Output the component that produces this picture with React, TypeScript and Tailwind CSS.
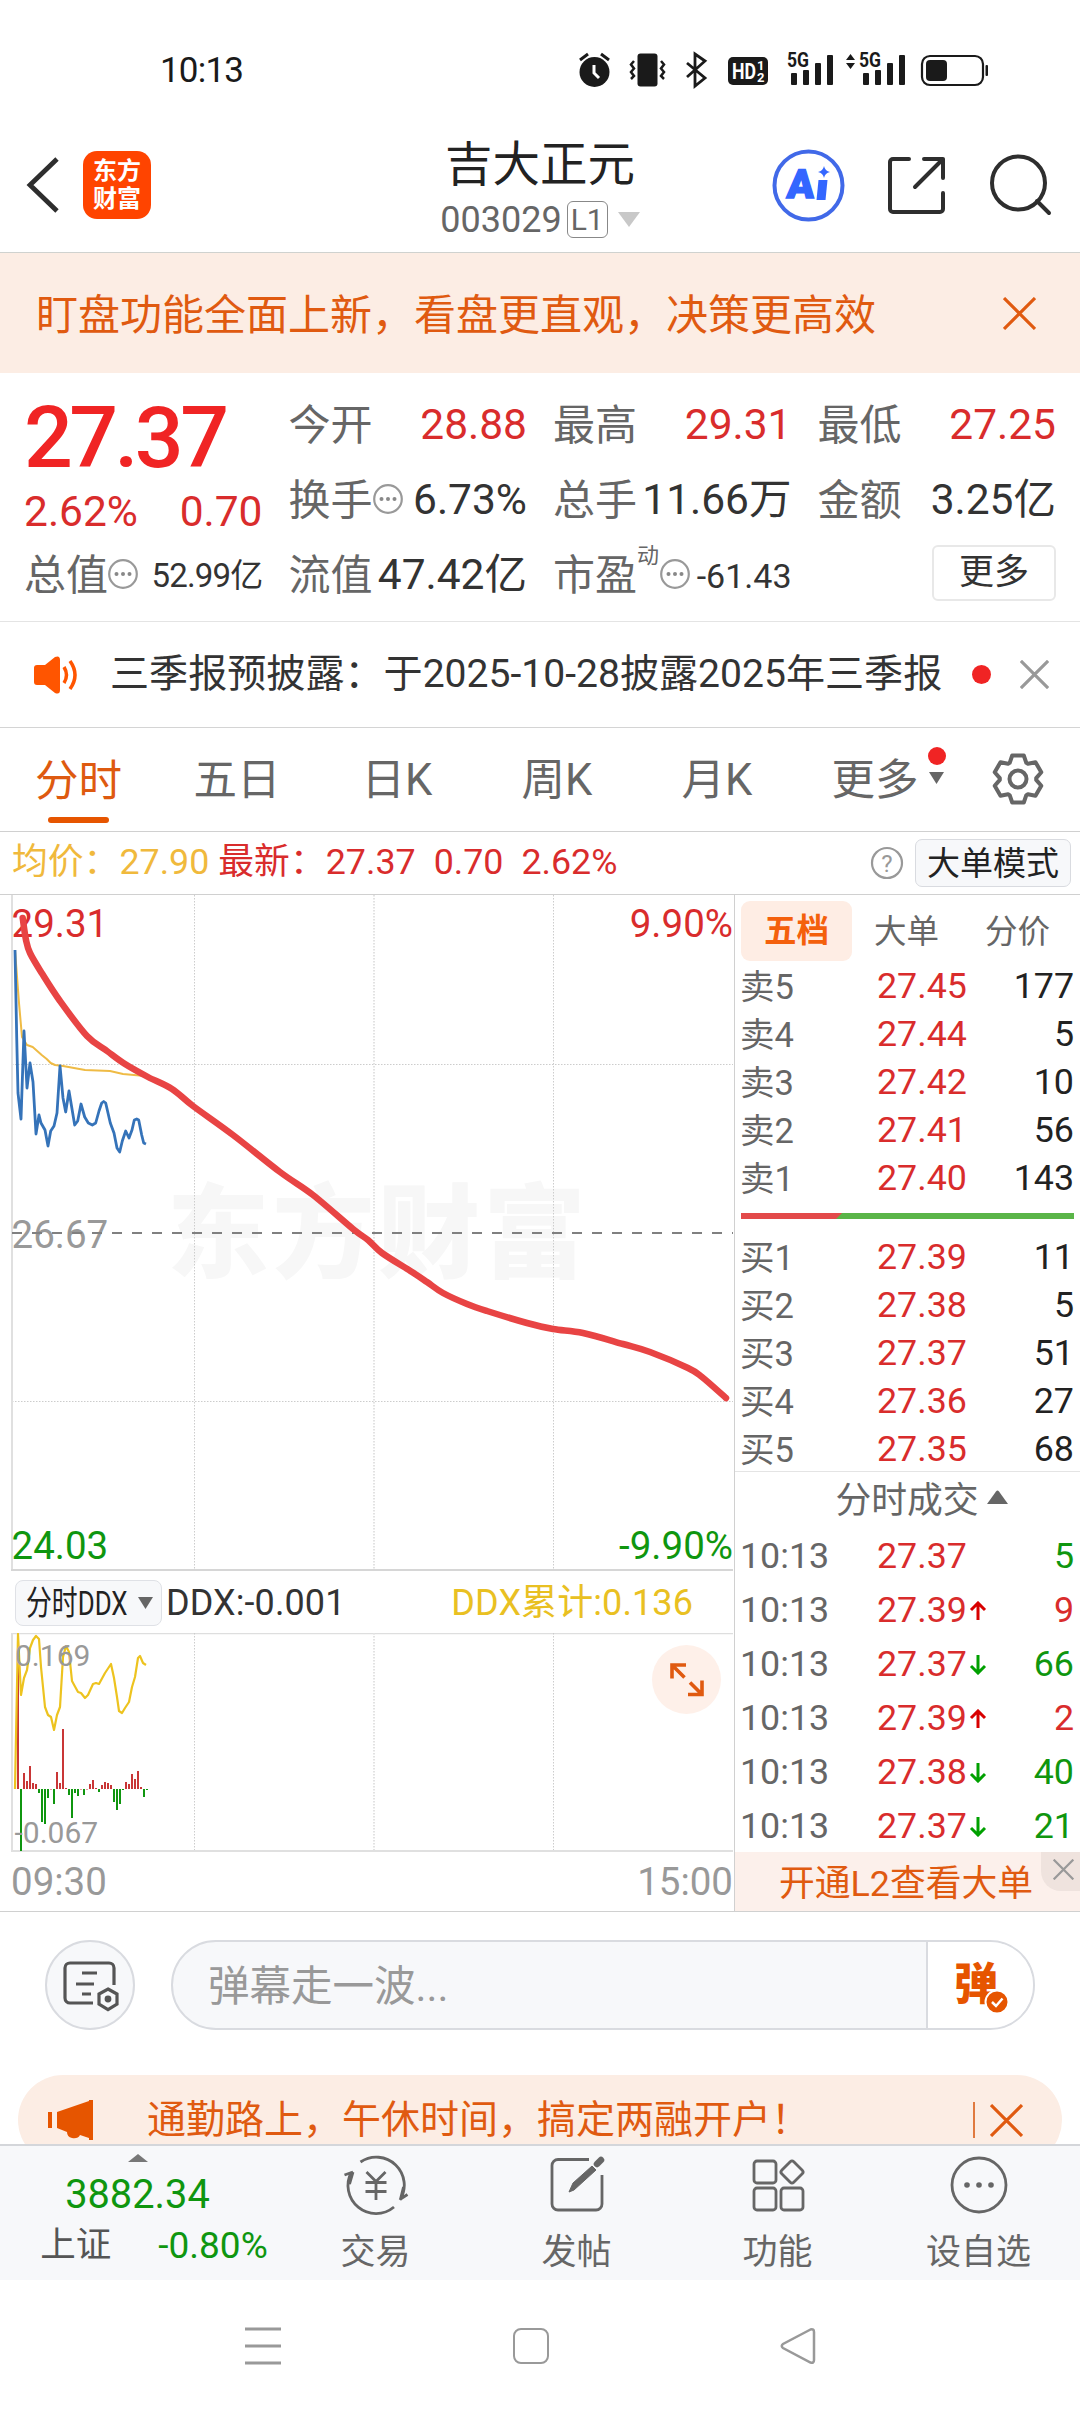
import type { ReactNode } from "react";

const RED = "#d92c2c";
const GREEN = "#0f960f";

const sells = [
  ["卖5", "27.45", "177"],
  ["卖4", "27.44", "5"],
  ["卖3", "27.42", "10"],
  ["卖2", "27.41", "56"],
  ["卖1", "27.40", "143"],
];

const buys = [
  ["买1", "27.39", "11"],
  ["买2", "27.38", "5"],
  ["买3", "27.37", "51"],
  ["买4", "27.36", "27"],
  ["买5", "27.35", "68"],
];

const trades = [
  { time: "10:13", price: "27.37", dir: "", vol: "5", up: false },
  { time: "10:13", price: "27.39", dir: "up", vol: "9", up: true },
  { time: "10:13", price: "27.37", dir: "down", vol: "66", up: false },
  { time: "10:13", price: "27.39", dir: "up", vol: "2", up: true },
  { time: "10:13", price: "27.38", dir: "down", vol: "40", up: false },
  { time: "10:13", price: "27.37", dir: "down", vol: "21", up: false },
];

const priceLine =
  "15,950 16.7,1037 18,1093 21,1119 24,1031 27,1088 30,1063 33,1082 36,1134 39,1115 41,1123 45,1130 48,1146 50.7,1131 54,1126 57,1113 60,1066 63,1098 65.7,1112 69,1091 74.7,1125 77.7,1121 81,1104 84.7,1117 88.3,1123 92.3,1125 95.7,1123 99,1111 101.7,1103 103.7,1101.5 105.7,1103 110.3,1123 114,1133 117,1148 119.7,1152 122.3,1141 125.7,1131 129,1138 132,1130 134.3,1120 136.7,1119 138.7,1120 141.7,1135 143.7,1143 146,1144";

const avgLine =
  "15,950 19,1003 22,1037 27,1045 32.7,1047 41.7,1055 46.7,1059 50.7,1063 55,1065 63,1066 85,1070 110,1071 123,1074 145,1076";

const trendLine =
  "22.7,918 26,940 30,953 41.7,973 60,1001 87,1036 107,1051 125,1064 148,1077 172,1089 193,1106 233,1135 280,1172 313,1195 353,1229 368,1240 382,1253 412,1272 427,1282 443,1293 467,1304 487,1311 527,1323 553,1329 583,1333 623,1344 650,1352 688,1368 702,1377 726,1398";

const ddxLine =
  "15,1789 18,1634 21,1695 24,1678 27,1670 30,1648 33,1640 36,1636 39,1639 41,1667 45,1707 48,1715 51,1717 54,1730 57,1715 60,1707 63,1657 66,1646 69,1652 72,1681 74.7,1686 78,1692 81,1693 85,1698 88,1695 93,1684 96,1683 99,1684 105,1673 111,1664 114,1678 117,1697 119,1711 122,1713 125,1708 129,1702 132,1687 135,1677 138,1658 140,1656 143,1663 146,1665";

// one value per minute, positive is drawn above the zero line
const ddxBars = [
  155, -62, 16, 8, 23, 6, 5, -4, -33, -35, -9, 0, -15, 17, 6, 60, 1, -6, -29,
  -4, -7, 0, -6, 0, 5, 9, 1, -3, 4, 7, 6, 4, -13, -21, -15, -1, 7, 5, 15, 10,
  18, 2, -8, -1,
];

const gearPoints = [0, 60, 120, 180, 240, 300]
  .flatMap((deg) => {
    const a = (deg * Math.PI) / 180;
    return [
      [-8.3, -16.2],
      [-5.8, -23.5],
      [5.8, -23.5],
      [8.3, -16.2],
    ].map(
      ([x, y]) =>
        `${(x * Math.cos(a) - y * Math.sin(a)).toFixed(1)},${(x * Math.sin(a) + y * Math.cos(a)).toFixed(1)}`,
    );
  })
  .join(" ");

// Catmull-Rom through the points, written as cubic beziers
function smooth(points: string) {
  const p = points.split(" ").map((s) => s.split(",").map(Number));
  let d = `M${p[0][0]} ${p[0][1]}`;
  for (let i = 0; i < p.length - 1; i++) {
    const a = p[i - 1] ?? p[i];
    const b = p[i];
    const c = p[i + 1];
    const e = p[i + 2] ?? c;
    d += `C${b[0] + (c[0] - a[0]) / 6} ${b[1] + (c[1] - a[1]) / 6} ${c[0] - (e[0] - b[0]) / 6} ${c[1] - (e[1] - b[1]) / 6} ${c[0]} ${c[1]}`;
  }
  return d;
}

function Cross({ size, color, width = 3 }: { size: number; color: string; width?: number }) {
  return (
    <svg width={size} height={size} viewBox="0 0 32 32" className="shrink-0">
      <path d="M1 1L31 31M31 1L1 31" stroke={color} strokeWidth={width} fill="none" />
    </svg>
  );
}

function Signal() {
  return (
    <g fill="#1a1a1a">
      <text x="0" y="14" fontSize="20" fontWeight="700" textLength="22" lengthAdjust="spacingAndGlyphs">
        5G
      </text>
      <rect x="4" y="20" width="6" height="12" rx="1" />
      <rect x="16" y="17" width="6" height="15" rx="1" />
      <rect x="28" y="10" width="6" height="22" rx="1" />
      <rect x="40" y="2" width="6" height="30" rx="1" />
    </g>
  );
}

function StatusBar() {
  return (
    <div className="flex h-[118px] items-center justify-between pt-[22px] pr-[90px] pl-[160px]">
      <span className="text-[35px] leading-none tracking-[-0.8px] text-[#1a1a1a]">10:13</span>
      <svg width="412" height="52" viewBox="578 43 412 52">
        {/* alarm */}
        <circle cx="594.5" cy="71" r="15" fill="#1a1a1a" />
        <path d="M594 64v8l5 5" stroke="#fff" strokeWidth="3" fill="none" />
        <path d="M580 59l8-6M609 59l-8-6" stroke="#1a1a1a" strokeWidth="3" />
        {/* vibrate */}
        <rect x="637.5" y="52.5" width="20" height="33" rx="3" fill="#1a1a1a" />
        <path
          d="M634 60l-3 3.500 3 4-3 3.500 3 4-3 3M661 60l3 3.500-3 4 3 3.500-3 4 3 3"
          stroke="#1a1a1a"
          strokeWidth="2.500"
          fill="none"
        />
        {/* bluetooth */}
        <path
          d="M687 62l18 15-10 8V53l10 7-18 16"
          stroke="#1a1a1a"
          strokeWidth="2.800"
          fill="none"
        />
        <rect x="728" y="56" width="40" height="28" rx="5" fill="#1a1a1a" />
        <text x="732" y="78" fontSize="22" fontWeight="700" fill="#fff" textLength="24" lengthAdjust="spacingAndGlyphs">
          HD
        </text>
        <text x="757" y="69" fontSize="13" fontWeight="700" fill="#fff">1</text>
        <text x="757" y="81" fontSize="13" fontWeight="700" fill="#fff">2</text>
        <g transform="translate(787 52)">
          <Signal />
        </g>
        <path d="M846 59l4.500-6 4.500 6zM846 62l4.500 6 4.500-6z" fill="#1a1a1a" />
        <g transform="translate(859 52)">
          <Signal />
        </g>
        {/* battery */}
        <rect x="922" y="55" width="61" height="29" rx="8" fill="none" stroke="#1a1a1a" strokeWidth="2.200" />
        <rect x="926" y="59" width="21" height="21" rx="4" fill="#1a1a1a" />
        <rect x="985.5" y="64" width="2.500" height="11" rx="1" fill="#1a1a1a" />
      </svg>
    </div>
  );
}

function TitleBar() {
  return (
    <div className="flex h-[135px] items-center border-b border-[#cfd2cf]">
      <div className="flex w-[360px] items-center gap-[23px] pl-[26px]">
        <svg width="34" height="56" viewBox="0 0 34 56">
          <path d="M31 2L4 28l27 26" stroke="#2e2e2e" strokeWidth="4.800" fill="none" />
        </svg>
        <div className="flex h-[68px] w-[68px] flex-col items-center justify-center rounded-[14px] bg-[#ff4400] text-[24px] leading-[28px] font-bold text-white">
          <span>东方</span>
          <span>财富</span>
        </div>
      </div>
      <div className="flex w-[360px] flex-col items-center pt-[13px]">
        <h1 className="text-[47.5px] leading-[56px] text-[#222]">吉大正元</h1>
        <div className="flex h-[54px] items-center">
          <span className="text-[36px] leading-none text-[#666]">003029</span>
          <span className="ml-[5px] flex h-[37px] w-[41px] items-center justify-center rounded-[6px] border border-[#888] text-[30px] leading-none text-[#666]">
            L1
          </span>
          <svg width="22" height="15" className="ml-[10px]">
            <path d="M0 0h22L11 15z" fill="#c8c8c8" />
          </svg>
        </div>
      </div>
      <svg width="360" height="90" viewBox="720 140 360 90">
        <circle cx="808.5" cy="185.5" r="34" fill="none" stroke="#4169e8" strokeWidth="4" />
        <text x="786" y="198" fontSize="40" fontWeight="900" fill="#3366ff" stroke="#3366ff" strokeWidth="1.500" transform="skewX(-4) translate(14 0)">
          A
        </text>
        <path d="M818.500 180h9l-2 20h-9z" fill="#3366ff" />
        <path d="M824 166q1 5 6 6-5 1-6 6-1-5-6-6 5-1 6-6z" fill="#3366ff" />
        <g stroke="#2e2e2e" strokeWidth="4" fill="none" strokeLinecap="round" strokeLinejoin="round">
          <path d="M909 159h-16a3 3 0 0 0-3 3v47a3 3 0 0 0 3 3h47a3 3 0 0 0 3-3v-16" />
          <path d="M924 159h19v19M943 159l-28 28" />
          <circle cx="1018.5" cy="183" r="26.500" />
          <path d="M1037 201l12 12" />
        </g>
      </svg>
    </div>
  );
}

function Dots() {
  return (
    <svg width="30" height="30" viewBox="0 0 30 30" className="mb-[4px] shrink-0">
      <circle cx="15" cy="15" r="13.800" fill="none" stroke="#999" strokeWidth="2.200" />
      <g fill="#888">
        <circle cx="8.5" cy="15" r="2" />
        <circle cx="15" cy="15" r="2" />
        <circle cx="21.5" cy="15" r="2" />
      </g>
    </svg>
  );
}

function Stat({ label, children }: { label: ReactNode; children: ReactNode }) {
  return (
    <div className="flex h-[75px] items-center justify-between text-[42.5px] leading-none whitespace-nowrap">
      <span className="flex items-center text-[42px] text-[#666]">{label}</span>
      {children}
    </div>
  );
}

function Quote() {
  return (
    <section className="grid h-[249px] grid-cols-4 gap-[26px] border-b border-[#e4e4e4] px-[24px] pt-[15px]">
      <div>
        <div className="h-[87px] pt-[6px] text-[86px] leading-[88px] font-medium tracking-[-3.6px] text-[#f02424]">
          27.37
        </div>
        <div className="flex h-[63px] items-center justify-between pt-[12px] text-[42.5px] leading-none text-[#d92c2c]">
          <span>2.62%</span>
          <span>0.70</span>
        </div>
        <Stat label={<>总值<Dots /></>}>
          <span className="text-[33px] tracking-[-0.8px] text-[#333]">52.99亿</span>
        </Stat>
      </div>
      <div>
        <Stat label="今开">
          <span className="text-[#d92c2c]">28.88</span>
        </Stat>
        <Stat label={<>换手<Dots /></>}>
          <span className="text-[#333]">6.73%</span>
        </Stat>
        <Stat label="流值">
          <span className="text-[#333]">47.42亿</span>
        </Stat>
      </div>
      <div>
        <Stat label="最高">
          <span className="text-[#d92c2c]">29.31</span>
        </Stat>
        <Stat label="总手">
          <span className="text-[#333]">11.66万</span>
        </Stat>
        <Stat
          label={
            <>
              市盈<sup className="-top-[20px] mr-[1px] text-[22px] leading-none">动</sup>
              <Dots />
            </>
          }
        >
          <span className="text-[34px] text-[#333]">-61.43</span>
        </Stat>
      </div>
      <div>
        <Stat label="最低">
          <span className="text-[#d92c2c]">27.25</span>
        </Stat>
        <Stat label="金额">
          <span className="text-[#333]">3.25亿</span>
        </Stat>
        <div className="flex h-[75px] items-start justify-end pt-[7px]">
          <button
            type="button"
            className="h-[56px] w-[124px] rounded-[6px] border-2 border-[#e8e8e8] pb-[2px] text-[35px] leading-none text-[#333]"
          >
            更多
          </button>
        </div>
      </div>
    </section>
  );
}

function News() {
  return (
    <div className="flex h-[106px] items-center border-b border-[#d4d4d4] pr-[31px] pl-[33px]">
      <svg width="46" height="38" viewBox="0 0 46 38">
        <path d="M4 9h8L22 1q5-2 5 3v30q0 5-5 3l-10-8H4q-3 0-3-3V12q0-3 3-3z" fill="#ff5500" />
        <path d="M31 11q5 8 0 16M37 5q10 14 0 28" stroke="#ff5500" strokeWidth="3.500" fill="none" />
      </svg>
      <span className="ml-[31px] text-[39.1px] leading-none whitespace-nowrap text-[#333]">
        三季报预披露：于2025-10-28披露2025年三季报
      </span>
      <span className="mr-[29px] ml-auto h-[19px] w-[19px] rounded-full bg-[#f02424]" />
      <Cross size={29} color="#999" width={3.5} />
    </div>
  );
}

function Tabs() {
  const cell = "flex w-[160px] shrink-0 items-center justify-center pt-[3px]";
  return (
    <nav className="flex h-[104px] border-b border-[#d0d0d0] text-[43.5px] leading-none text-[#666]">
      <div className="flex w-[157px] shrink-0 flex-col items-center pt-[32px] text-[#de5a10]">
        <span>分时</span>
        <span className="mt-auto mb-[8px] h-[6px] w-[61px] rounded-full bg-[#e65500]" />
      </div>
      <div className={cell}>五日</div>
      <div className={cell}>日K</div>
      <div className={cell}>周K</div>
      <div className={cell}>月K</div>
      <div className={cell}>
        <span className="relative -left-[2px]">
          更多
          <span className="absolute -top-[12px] -right-[27px] h-[18px] w-[18px] rounded-full bg-[#f02424]" />
          <svg width="15" height="12" className="absolute top-[13px] -right-[25px]">
            <path d="M0 0h15L7.500 12z" fill="#666" />
          </svg>
        </span>
      </div>
      <svg width="54" height="54" viewBox="-27 -27 54 54" className="mt-[24px] ml-[34px]">
        <g fill="none" stroke="#666" strokeWidth="4">
          <polygon points={gearPoints} strokeLinejoin="round" />
          <circle r="8.500" />
        </g>
      </svg>
    </nav>
  );
}

function InfoRow() {
  return (
    <div className="flex h-[63px] items-center border-b border-[#d0d0d0] pr-[9px] pl-[12px] text-[35.8px] leading-none text-[#d92c2c]">
      <span className="text-[#f0b93c]">均价：27.90</span>
      <span className="ml-[9px]">最新：27.37</span>
      <span className="ml-[18px]">0.70</span>
      <span className="ml-[18px]">2.62%</span>
      <svg width="34" height="34" viewBox="0 0 34 34" className="mr-[11px] ml-auto">
        <circle cx="17" cy="17" r="15" fill="none" stroke="#999" strokeWidth="2.200" />
        <text x="17" y="25.5" fontSize="24" textAnchor="middle" fill="#999">
          ?
        </text>
      </svg>
      <button
        type="button"
        className="h-[48px] w-[156px] rounded-[7px] border border-[#d9dbe0] bg-[#f7f8fa] text-[33px] leading-none text-[#222]"
      >
        大单模式
      </button>
    </div>
  );
}

function PriceChart() {
  return (
    <svg width="734" height="677" viewBox="0 895 734 677" className="block">
      <text x="167" y="1270" fontSize="102" fontWeight="900" fill="#f7f7f7" letterSpacing="3.5">
        东方财富
      </text>
      <g stroke="#ccc" strokeWidth="1" strokeDasharray="1.500 1.500">
        <path d="M194.500 895V1570M553.500 895V1570M12 1064.500H733M12 1401.500H733" />
        <path d="M374 895V1570" stroke="#e2e2e2" strokeWidth="2" />
      </g>
      <path d="M12 895V1571" stroke="#e0e0e0" strokeWidth="2" />
      <path d="M11 1570H733" stroke="#d6d6d6" strokeWidth="2" />
      <g fontSize="38.5">
        <text x="11.5" y="937" fill={RED}>29.31</text>
        <text x="733" y="937" fill={RED} textAnchor="end">9.90%</text>
        <text x="11.5" y="1248" fill="#999">26.67</text>
        <text x="11.5" y="1559" fill={GREEN}>24.03</text>
        <text x="733" y="1559" fill={GREEN} textAnchor="end">-9.90%</text>
      </g>
      <path d="M12 1233H733" stroke="#808080" strokeWidth="2" strokeDasharray="10 10" />
      <g fill="none" strokeLinejoin="round">
        <polyline points={avgLine} stroke="#efbb45" strokeWidth="2" />
        <polyline points={priceLine} stroke="#3573b9" strokeWidth="2.800" />
        <path d={smooth(trendLine)} stroke="#e84444" strokeWidth="6.500" strokeLinecap="round" />
      </g>
    </svg>
  );
}

function DdxChart() {
  return (
    <div className="relative">
      <svg width="734" height="220" viewBox="0 1633 734 220" className="block">
        <path d="M11 1633.500H733" stroke="#dedede" strokeWidth="1.500" />
        <path d="M12 1633V1852M11 1851H733" stroke="#e0e0e0" strokeWidth="2" />
        <path d="M194.500 1633V1850M553.500 1633V1850" stroke="#ccc" strokeDasharray="1.500 1.500" />
        <path d="M374 1633V1850" stroke="#e2e2e2" strokeWidth="2" strokeDasharray="1.500 1.500" />
        {ddxBars.map((v, i) => (
          <rect
            key={i}
            x={17 + i * 3}
            y={v >= 0 ? 1789 - v : 1789}
            width="2"
            height={Math.max(Math.abs(v), 0.5)}
            fill={v >= 0 ? "#c93636" : GREEN}
          />
        ))}
        <polyline points={ddxLine} fill="none" stroke="#edc31f" strokeWidth="2.200" strokeLinejoin="round" />
        <g fontSize="30" fill="#999">
          <text x="15" y="1666">0.169</text>
          <text x="14.5" y="1843">-0.067</text>
        </g>
      </svg>
      <div className="absolute top-[12px] left-[652px] flex h-[69px] w-[69px] items-center justify-center rounded-full bg-[#fef0e9]">
        <svg width="34" height="34" viewBox="0 0 34 34">
          <path d="M2 15.500V2h14M2.500 2.500L14.500 14.500M32 17.500V31.500H18M31.500 31L20 19.500" stroke="#e05a10" strokeWidth="3.600" fill="none" />
        </svg>
      </div>
    </div>
  );
}

function DdxHeader() {
  return (
    <div className="flex h-[61px] items-center pl-[15px] text-[36px] leading-none">
      <div className="flex h-[46px] w-[147px] items-center rounded-[8px] border border-[#dfe1e6] bg-[#f7f8fa] pl-[10px]">
        <span className="w-[102px] origin-left scale-x-[0.760] whitespace-nowrap text-[34px] text-[#222]">分时DDX</span>
        <svg width="15" height="12" className="ml-[10px]">
          <path d="M0 0h15L7.500 12z" fill="#666" />
        </svg>
      </div>
      <span className="ml-[4px] tracking-[0.1px] text-[#333]">DDX:-0.001</span>
      <span className="mr-[41px] ml-auto tracking-[0.1px] text-[#e9c022]">DDX累计:0.136</span>
    </div>
  );
}

function BookRow({ row }: { row: string[] }) {
  return (
    <div className="flex h-[48px] shrink-0 items-center pr-[6px] pl-[5px]">
      <span className="w-[137px] text-[34.5px] text-[#666]">{row[0]}</span>
      <span className="text-[#d92c2c]">{row[1]}</span>
      <span className="ml-auto text-[#222]">{row[2]}</span>
    </div>
  );
}

function OrderBook() {
  return (
    <aside className="flex w-[346px] flex-col border-l border-[#d0d0d0] text-[35.8px] leading-none">
      <div className="mt-[6px] flex h-[60px] shrink-0 pl-[6px] text-[32.5px] text-[#666]">
        <div className="flex w-[111px] items-center justify-center rounded-[9px] bg-[#feede4] font-bold text-[#f4600c]">
          五档
        </div>
        <div className="flex w-[111px] items-center justify-center pt-[2px] pr-[2px]">大单</div>
        <div className="flex w-[111px] items-center justify-center pt-[2px] pr-[2px]">分价</div>
      </div>
      <div className="mt-[2px]">
        {sells.map((r) => (
          <BookRow key={r[0]} row={r} />
        ))}
      </div>
      <svg width="333" height="6" className="mt-[10px] mb-[15px] ml-[6px] shrink-0">
        <rect width="333" height="6" fill="#5ab548" />
        <path d="M0 0h101l-6 6H0z" fill="#e34a4a" />
      </svg>
      <div className="flex h-[238px] shrink-0 flex-col border-b border-[#e4e4e4]">
        {buys.map((r) => (
          <BookRow key={r[0]} row={r} />
        ))}
      </div>
      <div className="flex h-[58px] shrink-0 items-center justify-center gap-[8px] pt-[2px] pl-[28px] text-[#666]">
        <span>分时成交</span>
        <svg width="21" height="14" className="mb-[10px]">
          <path d="M0 14L9 1.500q1.500-2 3 0L21 14z" fill="#666" />
        </svg>
      </div>
      <div className="h-[322px] shrink-0">
        {trades.map((t, i) => (
          <div key={i} className="flex h-[54px] items-center pr-[6px] pl-[5px]">
            <span className="w-[137px] text-[#666]">{t.time}</span>
            <span className="text-[#d92c2c]">{t.price}</span>
            {t.dir && (
              <svg width="18" height="20" viewBox="0 0 18 20" className="ml-[2px]">
                <path
                  d={t.dir === "up" ? "M9 19V2M2 9l7-7 7 7" : "M9 0v18M2 11l7 7 7-7"}
                  stroke={t.dir === "up" ? "#d80000" : "#00a000"}
                  strokeWidth="3"
                  fill="none"
                />
              </svg>
            )}
            <span className="ml-auto" style={{ color: t.up ? RED : GREEN }}>
              {t.vol}
            </span>
          </div>
        ))}
      </div>
      <div className="relative flex h-[59px] shrink-0 items-center justify-center bg-[#fcf0eb] pt-[6px] pr-[3px] text-[#e05a10]">
        开通L2查看大单
        <div className="absolute top-0 right-0 flex h-[39px] w-[39px] items-center justify-center rounded-bl-[20px] bg-[#efe3de] pr-[1px] pb-[4px] pl-[6px]">
          <Cross size={21} color="#999" width={3.5} />
        </div>
      </div>
    </aside>
  );
}

function Danmu() {
  return (
    <div className="flex items-center px-[45px] pt-[28px]">
      <div className="flex h-[90px] w-[90px] items-center justify-center rounded-full border-2 border-[#d9dbe0] bg-[#f7f8fa]">
        <svg width="60" height="54" viewBox="0 0 60 54" fill="none" stroke="#555" strokeWidth="3.200" className="mt-[3px]">
          <path d="M33 43H10a5 5 0 0 1-5-5V8a5 5 0 0 1 5-5h39a5 5 0 0 1 5 5v17" />
          <path d="M22 13h15M16 24h18M22 34h9" />
          <path d="M48 29l9 5v10l-9 5.500-9-5.500V34z" />
          <circle cx="48" cy="39" r="1.800" fill="#555" />
        </svg>
      </div>
      <div className="ml-[36px] flex h-[90px] w-[864px] items-center overflow-hidden rounded-full border-2 border-[#d9dbe0] bg-[#f7f8fa]">
        <span className="pt-[3px] pl-[35px] text-[41.5px] leading-none text-[#999]">弹幕走一波...</span>
        <div className="relative ml-auto flex h-full w-[107px] items-center border-l-2 border-[#d9dbe0] bg-white pl-[26px] text-[44px] leading-none font-black text-[#e65500]">
          弹
          <svg width="26" height="26" viewBox="0 0 26 26" className="absolute top-[47px] left-[56px]">
            <circle cx="13" cy="13" r="11.500" fill="#e65500" stroke="#fff" strokeWidth="2" />
            <path d="M8 13l4 4 6.500-7.500" stroke="#fff" strokeWidth="2.500" fill="none" />
          </svg>
        </div>
      </div>
    </div>
  );
}

function PromoBar() {
  return (
    <div className="mx-[18px] mt-[45px] flex h-[90px] shrink-0 items-center rounded-full bg-[#fcede4] pr-[39px] pl-[30px] text-[#e05a10]">
      <svg width="46" height="40" viewBox="0 0 46 40" fill="#e65500">
        <path d="M0 12h4v16H0zM9 12L41 1V0h4v40h-4v-2l-9-3q-2 4-8 3-5-1-5-6L9 28z" />
      </svg>
      <span className="ml-[53px] text-[39px] leading-none whitespace-nowrap">
        通勤路上，午休时间，搞定两融开户！
      </span>
      <span className="mr-[15px] ml-auto h-[36px] w-[2px] bg-[#e07a40]" />
      <Cross size={33} color="#e05a10" />
    </div>
  );
}

function NavItem({ label, children }: { label: string; children: ReactNode }) {
  return (
    <div className="flex w-[201px] flex-col items-center pt-[9px]">
      <svg width="66" height="60" viewBox="-33 -30 66 60" fill="none" stroke="#666" strokeWidth="2.800">
        {children}
      </svg>
      <span className="mt-[20px] text-[35px] leading-none text-[#666]">{label}</span>
    </div>
  );
}

function BottomNav() {
  return (
    <nav className="flex h-[136px] shrink-0 border-t-2 border-[#d4d6da] bg-[#f7f8fa]">
      <div className="flex w-[275px] flex-col items-center text-[#0f960f]">
        <svg width="20" height="8" className="mt-[8px]">
          <path d="M0 8L10 0l10 8z" fill="#777" />
        </svg>
        <span className="mt-[13px] text-[39.8px] leading-none">3882.34</span>
        <div className="mt-[12px] flex items-center gap-[47px] pl-[33px] text-[35.5px] leading-none">
          <span className="pt-[1px] text-[#555]">上证</span>
          <span className="text-[37px]">-0.80%</span>
        </div>
      </div>
      <NavItem label="交易">
        <path d="M-15.500 -23A28 28 0 0 1 24 15M24.500 14l7-4.500M24.500 14l3-12" />
        <path d="M18 22A28 28 0 0 1 -24.500 -13M-23 -13l-8.500 3M-23 -13l-3.500 12" />
        <path d="M-9.500 -13L0 -3.500 9.500 -13M0 -3.500V15M-10.500 -2.500h21M-10.500 6.500h21" />
      </NavItem>
      <NavItem label="发帖">
        <path d="M12 -25.500H-19a6 6 0 0 0-6 6V19a6 6 0 0 0 6 6H19a6 6 0 0 0 6-6V-10" />
        <path d="M-8 7l4-9L15 -19l4 4L-3 5z" fill="#666" strokeWidth="1" />
        <path d="M20 -21l4-4" strokeWidth="6.500" strokeLinecap="round" />
      </NavItem>
      <NavItem label="功能">
        <rect x="-24" y="-24" width="22" height="22" rx="3" />
        <rect x="-24" y="3" width="22" height="22" rx="3" />
        <rect x="3" y="3" width="22" height="22" rx="3" />
        <rect x="5.5" y="-21.5" width="17" height="17" rx="2.500" transform="rotate(45 14 -13)" />
      </NavItem>
      <NavItem label="设自选">
        <circle r="27" />
        <g fill="#666" stroke="none">
          <circle cx="-12" r="2.800" />
          <circle r="2.800" />
          <circle cx="12" r="2.800" />
        </g>
      </NavItem>
    </nav>
  );
}

function SystemNav() {
  return (
    <div className="flex h-[132px] shrink-0 items-center justify-between pr-[264px] pl-[245px]">
      <svg width="36" height="38" viewBox="0 0 36 38">
        <path d="M0 2h36M0 19h36M0 36h36" stroke="#999" strokeWidth="3" />
      </svg>
      <div className="h-[36px] w-[36px] rounded-[8px] border-[2.5px] border-[#999]" />
      <svg width="36" height="38" viewBox="0 0 36 38">
        <path d="M30.500 2.500L3 17q-2.500 2 0 4l27.500 14.500q3.500 1 3.500-2.500V5q0-3.500-3.500-2.500z" stroke="#999" strokeWidth="2.500" fill="none" />
      </svg>
    </div>
  );
}

export default function App() {
  return (
    <div className="flex h-[2412px] w-[1080px] flex-col overflow-hidden bg-white font-['Roboto','Noto_Sans_CJK_SC',sans-serif]">
      <main className="flex h-[2144px] shrink-0 flex-col overflow-hidden *:shrink-0">
        <StatusBar />
        <TitleBar />
        <div className="flex h-[120px] items-center justify-between bg-[#fcede4] pr-[44px] pl-[36px] text-[42px] leading-none whitespace-nowrap text-[#e05a10]">
          <span className="pt-[5px]">盯盘功能全面上新，看盘更直观，决策更高效</span>
          <Cross size={33} color="#e05a10" />
        </div>
        <Quote />
        <News />
        <Tabs />
        <InfoRow />
        <div className="flex h-[1017px] border-b border-[#d0d0d0]">
          <div className="w-[734px]">
            <PriceChart />
            <DdxHeader />
            <DdxChart />
            <div className="flex h-[58px] items-center justify-between pr-[1px] pl-[11px] text-[38.5px] leading-none text-[#999]">
              <span>09:30</span>
              <span>15:00</span>
            </div>
          </div>
          <OrderBook />
        </div>
        <Danmu />
        <PromoBar />
      </main>
      <BottomNav />
      <SystemNav />
    </div>
  );
}
